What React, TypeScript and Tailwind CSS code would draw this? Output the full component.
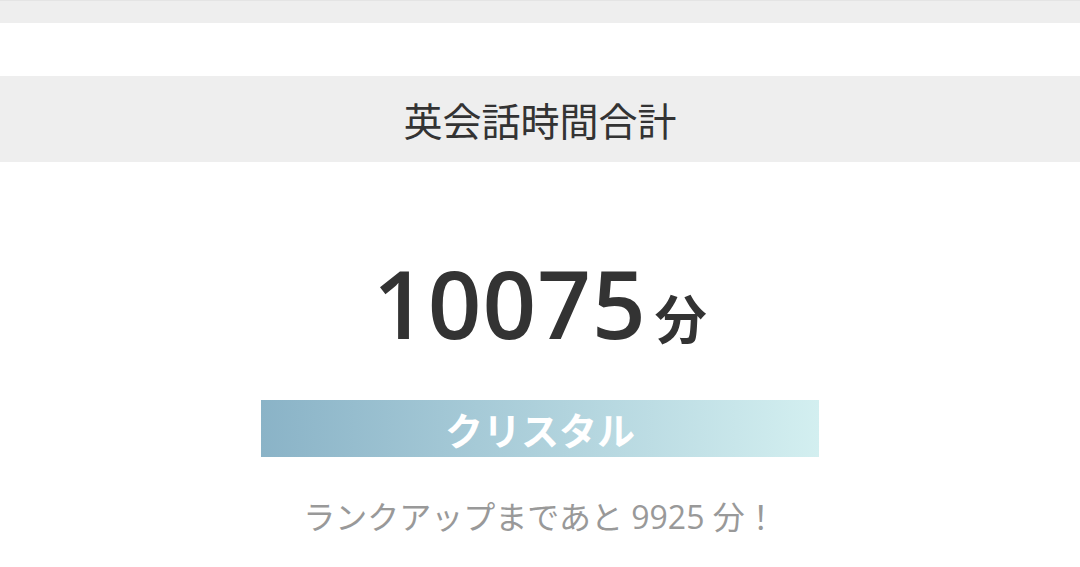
import React from "react";

const jp = { fontFamily: '"Open Sans", "Noto Sans CJK JP", sans-serif' };
const cjk = { fontFamily: '"Noto Sans CJK JP", sans-serif' };

export default function App() {
  return (
    <div className="w-[1080px] h-[567px] bg-white overflow-hidden" style={jp}>
      <div className="h-[23px] bg-[#eeeeee] border-t border-[#e4e4e4]" />
      <div className="h-[53px]" />
      <div className="h-[86px] bg-[#eeeeee] flex items-center justify-center">
        <span className="text-[39px] text-[#333333] leading-none" style={cjk}>
          英会話時間合計
        </span>
      </div>
      <div className="flex flex-col items-center">
        <div className="mt-[94px] flex items-baseline text-[#333333] leading-none">
          <span className="text-[94px] font-semibold tracking-[1px]">10075</span>
          <span className="text-[52px] font-bold ml-[8px]" style={cjk}>分</span>
        </div>
        <div className="mt-[50px] w-[558px] h-[57px] bg-gradient-to-r from-[#8ab3c7] to-[#d3eff0] flex items-center justify-center">
          <span className="text-[38px] font-bold text-white leading-none" style={cjk}>
            クリスタル
          </span>
        </div>
        <div className="mt-[44px] text-[32px] text-[#999999] leading-none">
          ランクアップまであと 9925 分！
        </div>
      </div>
    </div>
  );
}
